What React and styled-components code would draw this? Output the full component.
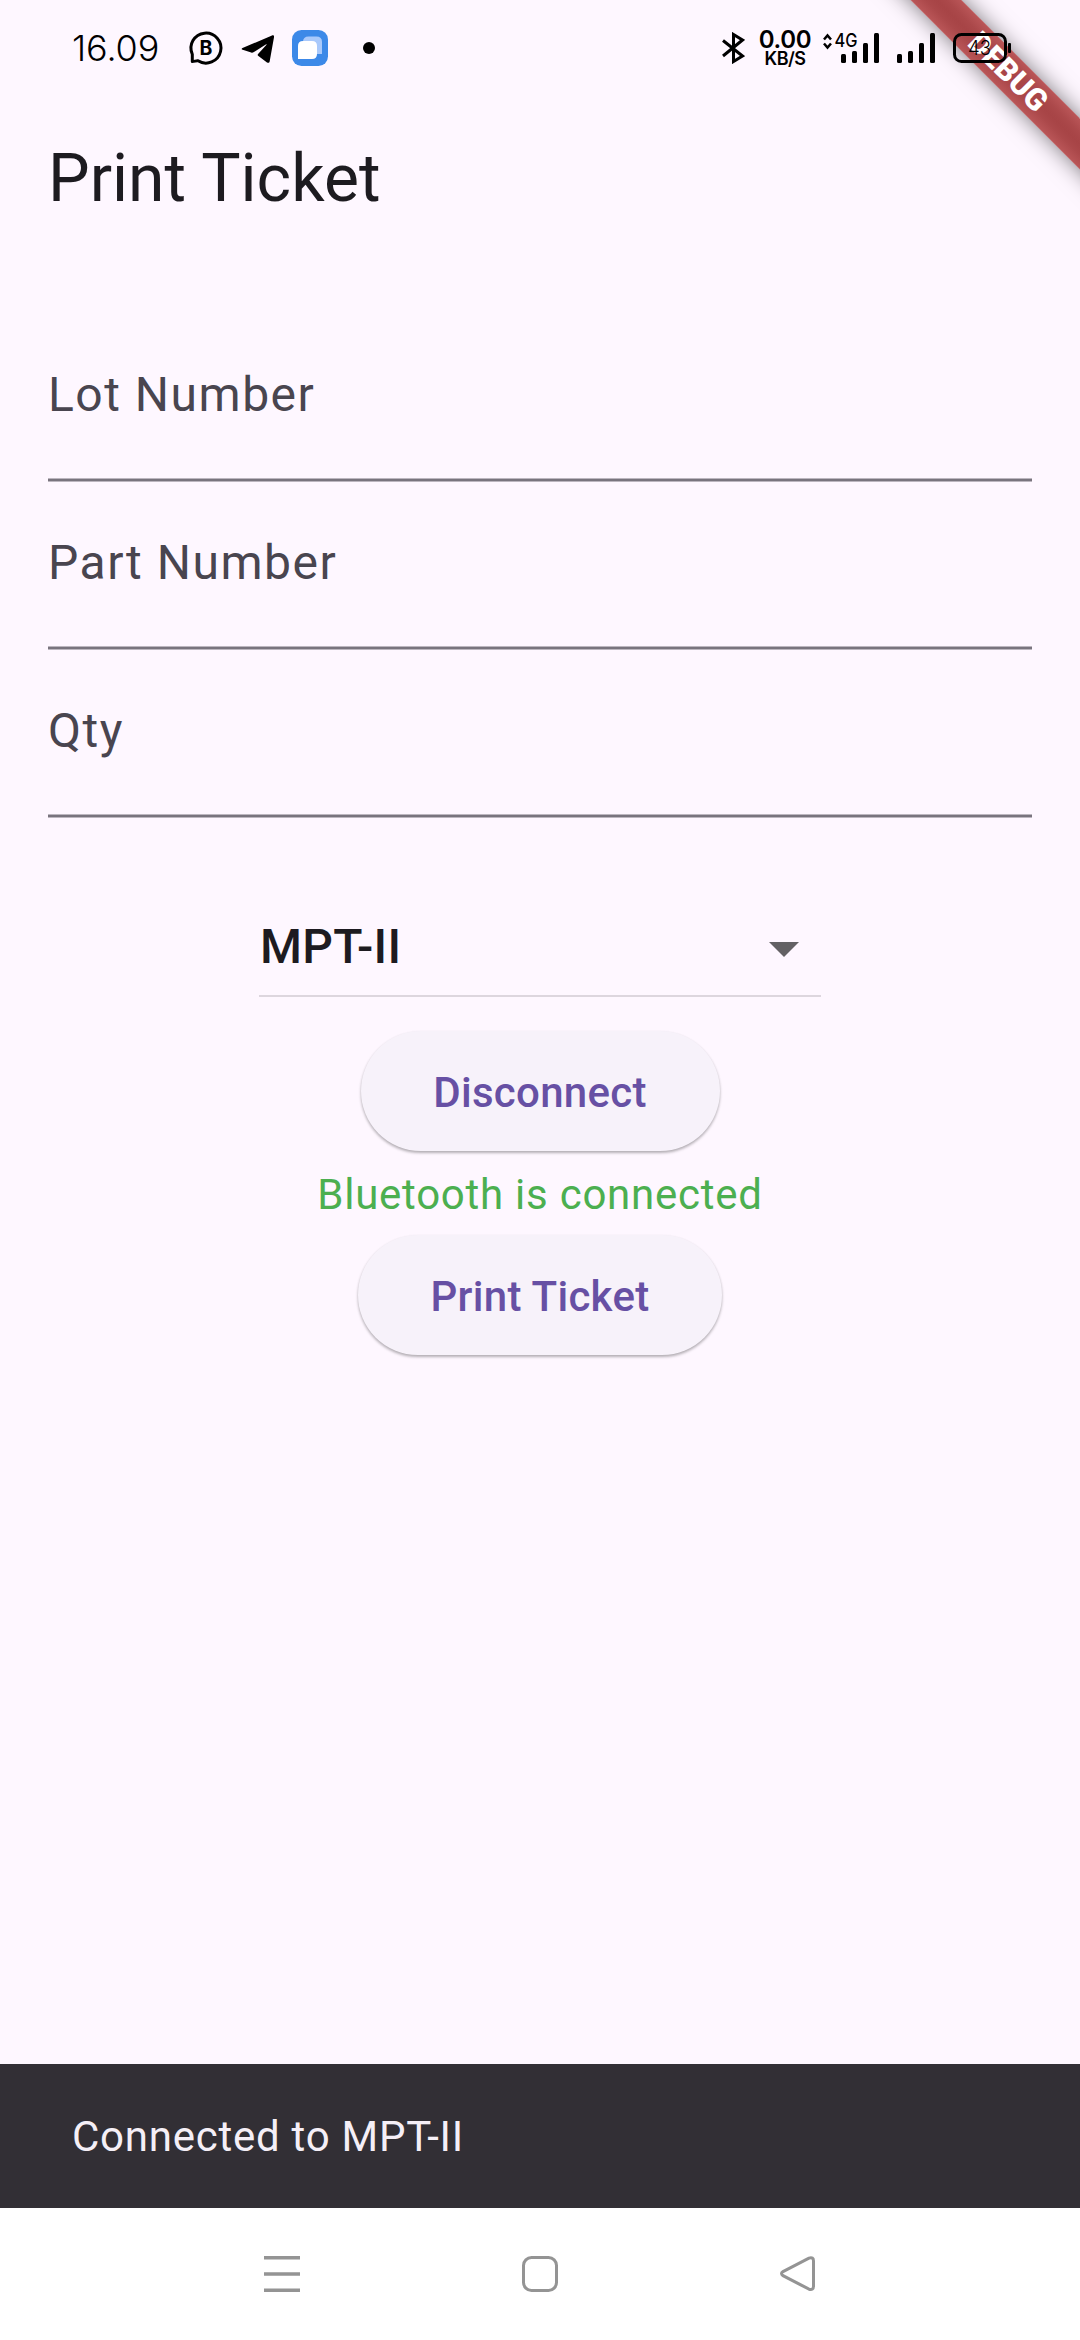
import React from 'react';
import styled, { createGlobalStyle } from 'styled-components';

const Global = createGlobalStyle`
  * { box-sizing: border-box; }
  body { margin: 0; background: #fef7ff; font-family: Roboto, "Noto Sans", sans-serif; }
  svg { display: block; flex: none; }
`;

const Screen = styled.div`
  position: relative;
  display: flex;
  flex-direction: column;
  width: 1080px;
  height: 2340px;
  overflow: hidden;
  background: #fef7ff;
`;

const StatusBar = styled.header`
  position: relative;
  z-index: 2;
  display: flex;
  align-items: center;
  justify-content: space-between;
  height: 96px;
  padding: 0 66px 0 72px;
  color: #000;
`;

const StatusGroup = styled.div`
  display: flex;
  align-items: center;
  height: 96px;
`;

const Clock = styled.span`
  width: 113px;
  font: 350 36px/44px Inter, sans-serif;
  letter-spacing: -0.1px;
  white-space: nowrap;
`;

const Speed = styled.div`
  display: flex;
  flex-direction: column;
  align-items: center;
  width: 54px;
  margin: 0 8px 0 13px;
  white-space: nowrap;
`;

const SpeedValue = styled.span`
  font: 600 24px/20px Inter, sans-serif;
  letter-spacing: -0.3px;
`;

const SpeedUnit = styled.span`
  font: 600 18px/17px Inter, sans-serif;
  letter-spacing: -0.5px;
`;

const Ribbon = styled.div`
  position: absolute;
  z-index: 1;
  top: 0;
  right: 0;
  width: 240px;
  height: 240px;
  overflow: hidden;
`;

const RibbonBand = styled.div`
  position: absolute;
  top: 54px;
  left: -12px;
  display: flex;
  align-items: center;
  justify-content: center;
  width: 360px;
  height: 36px;
  transform: rotate(45deg);
  color: #fff;
  background: linear-gradient(#ba5658, #ab484a 30%, #a74446 50%, #ab484a 70%, #ba5658);
  box-shadow: 0 0 22px rgba(0, 0, 0, 0.5);
  font-size: 30.6px;
  font-weight: 900;
  line-height: 36px;
`;

const AppBar = styled.div`
  display: flex;
  align-items: center;
  height: 168px;
  padding: 0 48px 2px;
`;

const Title = styled.h1`
  margin: 0;
  color: #1d1b20;
  font-size: 66px;
  font-weight: 400;
  line-height: 84px;
`;

const Form = styled.main`
  display: flex;
  flex: 1;
  flex-direction: column;
  align-items: center;
  padding: 50px 48px 0;
`;

const Field = styled.label`
  display: flex;
  align-items: flex-start;
  width: 984px;
  height: 168px;
  padding-top: 45px;
  color: #49454f;
  background: linear-gradient(#bcb6bf 1px, #79747e 1px, #79747e 3px, #bcb6bf 3px) bottom / 100% 4px no-repeat;
  font-size: 48px;
  line-height: 72px;
  letter-spacing: 1.5px;
`;

const Dropdown = styled.div`
  display: flex;
  align-items: center;
  justify-content: space-between;
  width: 562px;
  height: 100px;
  margin-top: 79px;
  padding: 1px 0 0 1px;
  border-bottom: 2px solid #ddd6de;
  color: #1d1b20;
  font-size: 48px;
  font-weight: 500;
  line-height: 72px;
  letter-spacing: 0.3px;
`;

const Caret = styled.svg`
  margin: 6px 22px 0 0;
`;

const PillButton = styled.button`
  display: flex;
  align-items: center;
  justify-content: center;
  width: ${(p) => p.$width}px;
  height: 120px;
  margin-top: ${(p) => p.$gap}px;
  padding: 4px 0 0;
  border: 0;
  border-radius: 60px;
  color: #6750a4;
  background: #f7f2fa;
  box-shadow: 0 2px 3px rgba(0, 0, 0, 0.27), 0 1px 3px rgba(0, 0, 0, 0.06);
  font: 500 42px/60px Roboto, sans-serif;
  letter-spacing: 0.3px;
`;

const Status = styled.p`
  margin: 12px 0 0;
  height: 60px;
  padding-top: 2px;
  color: #4caf50;
  font-size: 42px;
  line-height: 60px;
  letter-spacing: 0.75px;
`;

const Snackbar = styled.div`
  display: flex;
  align-items: center;
  height: 144px;
  padding: 2px 72px 0;
  color: #f5eff7;
  background: #322f35;
  font-size: 42px;
  line-height: 60px;
  letter-spacing: 0.75px;
`;

const NavBar = styled.nav`
  display: flex;
  align-items: center;
  justify-content: center;
  gap: 222px;
  height: 132px;
  background: #fff;
`;

const fields = ['Lot Number', 'Part Number', 'Qty'];

const LeftIcons = () => (
  <svg width="190" height="48" viewBox="185 24 190 48">
    <path d="M192.3 61.5v-7.2a15 15 0 1 1 5.7 6.500c-1.800-.2-3.400.7-5.700.7Z" fill="none" stroke="#000" strokeWidth="3" strokeLinejoin="round" />
    <text x="199.500" y="55" fontFamily="Inter, sans-serif" fontSize="19.500" fontWeight="700">B</text>
    <path d="M242.500 48 272 35.500c1.300-.500 2.300.200 2 1.700l-4.300 24c-.3 1.700-1.400 2.100-2.700 1.200l-8.600-6.300c-1-.8-.9-1.600-.1-2.400l8-8.600c.6-.8.200-1-.5-.6l-12.300 7.800c-.7.4-1.500.5-2.300.2l-8.500-2.700c-1.300-.4-1.400-1.200-.2-1.800Z" />
    <rect x="292" y="30" width="36" height="36" rx="9.500" fill="#3c89e8" />
    <path d="M303 42q0-5.500 5.500-5.500h8q5.500 0 5.500 5.500v12h-10Z" fill="#a9c9fb" />
    <path d="M298 46q0-5 5-5h9q5 0 5 5v8q0 5-5 5h-14Z" fill="#fff" />
    <circle cx="369" cy="48" r="6" />
  </svg>
);

const Bluetooth = () => (
  <svg width="24" height="32" viewBox="721 32 24 32" fill="none" stroke="#000" strokeWidth="3">
    <path d="m723 40.500 19.500 15.500-9 5.500v-27l9 5.500L723 56" />
  </svg>
);

const Signals = () => (
  <svg width="194" height="48" viewBox="820 24 194 48">
    <path d="m824 39.500 3.500-4 3.500 4M824 43.500l3.500 4 3.500-4" fill="none" stroke="#000" strokeWidth="2.500" />
    <text x="834.500" y="47" fontFamily="Inter, sans-serif" fontSize="18.500" fontWeight="500" textLength="23" lengthAdjust="spacingAndGlyphs">4G</text>
    <g>
      <rect x="841" y="54" width="5" height="9" rx="1.500" />
      <rect x="852" y="51" width="5" height="12" rx="1.500" />
      <rect x="863" y="43" width="5" height="20" rx="1.500" />
      <rect x="874" y="33" width="5" height="30" rx="1.500" />
      <rect x="897" y="54" width="5" height="9" rx="1.500" />
      <rect x="908" y="51" width="5" height="12" rx="1.500" />
      <rect x="919" y="43" width="5" height="20" rx="1.500" />
      <rect x="930" y="33" width="5" height="30" rx="1.500" />
    </g>
    <rect x="954.500" y="34.500" width="51" height="27" rx="7" fill="none" stroke="#000" strokeWidth="3" />
    <rect x="1008" y="43" width="3" height="10" rx="1" />
    <text x="968" y="54.700" fontFamily="Inter, sans-serif" fontSize="20" fontWeight="300" textLength="23" lengthAdjust="spacingAndGlyphs">43</text>
  </svg>
);

export default function App() {
  return (
    <Screen>
      <Global />
      <StatusBar>
        <StatusGroup>
          <Clock>16.09</Clock>
          <LeftIcons />
        </StatusGroup>
        <StatusGroup>
          <Bluetooth />
          <Speed>
            <SpeedValue>0.00</SpeedValue>
            <SpeedUnit>KB/S</SpeedUnit>
          </Speed>
          <Signals />
        </StatusGroup>
      </StatusBar>
      <Ribbon>
        <RibbonBand>DEBUG</RibbonBand>
      </Ribbon>
      <AppBar>
        <Title>Print Ticket</Title>
      </AppBar>
      <Form>
        {fields.map((name) => (
          <Field key={name}>{name}</Field>
        ))}
        <Dropdown>
          MPT-II
          <Caret width="30" height="15" viewBox="0 0 30 15">
            <path d="M0 0h30L15 15Z" fill="#636164" />
          </Caret>
        </Dropdown>
        <PillButton $width={359} $gap={34}>Disconnect</PillButton>
        <Status>Bluetooth is connected</Status>
        <PillButton $width={364} $gap={12}>Print Ticket</PillButton>
      </Form>
      <Snackbar>Connected to MPT-II</Snackbar>
      <NavBar>
        <svg width="36" height="36" viewBox="0 0 36 36" stroke="#949494" strokeWidth="3.400">
          <path d="M0 1.700h36M0 18h36M0 34.300h36" />
        </svg>
        <svg width="36" height="36" viewBox="0 0 36 36" fill="none" stroke="#949494" strokeWidth="3">
          <rect x="1.500" y="1.500" width="33" height="33" rx="8" />
        </svg>
        <svg width="36" height="36" viewBox="0 0 36 36" fill="none" stroke="#949494" strokeWidth="3">
          <path d="M29 2.100 3 15.600Q0 17.500 3 19.700L29 33.200Q33.500 34.500 33.500 30V5Q33.500.700 29 2.100Z" />
        </svg>
      </NavBar>
    </Screen>
  );
}
